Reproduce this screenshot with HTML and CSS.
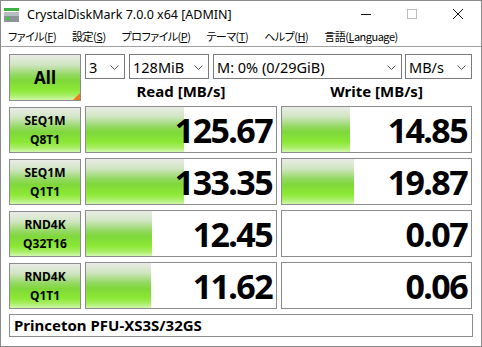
FILE: index.html
```html
<html>
    <head>
        <meta charset="UTF-8">
        <link rel="stylesheet" href="styles.css">
    </head>
    <body>
        <div class="window">
            <div class="titlebar">
                <svg class="app-icon" width="16" height="16" viewBox="0 0 16 16">
                    <rect x="0" y="0" width="15" height="3" fill="#3cb043"/>
                    <rect x="0" y="4" width="15" height="10" fill="#8d9499"/>
                    <rect x="0" y="4" width="15" height="4" fill="#b7bdc1"/>
                    <rect x="2" y="9" width="4" height="3" fill="#45c04a"/>
                </svg>
                <span class="title">CrystalDiskMark 7.0.0 x64 [ADMIN]</span>
                <div class="caption-btn">
                    <svg width="10" height="10" viewBox="0 0 10 10"><line x1="0" y1="5.5" x2="10" y2="5.5" stroke="#111" stroke-width="1"/></svg>
                </div>
                <div class="caption-btn">
                    <svg width="10" height="10" viewBox="0 0 10 10"><rect x="0.5" y="0.5" width="9" height="9" fill="none" stroke="#bdbdbd" stroke-width="1"/></svg>
                </div>
                <div class="caption-btn">
                    <svg width="10" height="10" viewBox="0 0 10 10"><path d="M0 0 L10 10 M10 0 L0 10" stroke="#111" stroke-width="1"/></svg>
                </div>
            </div>
            <div class="menubar">
                <span>ファイル(<u>F</u>)</span>
                <span>設定(<u>S</u>)</span>
                <span>プロファイル(<u>P</u>)</span>
                <span>テーマ(<u>T</u>)</span>
                <span>ヘルプ(<u>H</u>)</span>
                <span>言語(<u>L</u>anguage)</span>
            </div>
            <div class="main">
                <div class="grid">
                    <div class="all-btn green">All<span class="corner"></span></div>
                    <div class="top-right">
                        <div class="selects">
                            <div class="select w-count">3<svg class="chev" width="9" height="5" viewBox="0 0 9 5"><polyline points="0.5,0.5 4.5,4.5 8.5,0.5" fill="none" stroke="#555"/></svg></div>
                            <div class="select w-size">128MiB<svg class="chev" width="9" height="5" viewBox="0 0 9 5"><polyline points="0.5,0.5 4.5,4.5 8.5,0.5" fill="none" stroke="#555"/></svg></div>
                            <div class="select w-drive">M: 0% (0/29GiB)<svg class="chev" width="9" height="5" viewBox="0 0 9 5"><polyline points="0.5,0.5 4.5,4.5 8.5,0.5" fill="none" stroke="#555"/></svg></div>
                            <div class="select w-unit">MB/s<svg class="chev" width="9" height="5" viewBox="0 0 9 5"><polyline points="0.5,0.5 4.5,4.5 8.5,0.5" fill="none" stroke="#555"/></svg></div>
                        </div>
                        <div class="headers">
                            <div>Read [MB/s]</div>
                            <div>Write [MB/s]</div>
                        </div>
                    </div>

                    <div class="test-btn green">SEQ1M<br>Q8T1</div>
                    <div class="result"><div class="bar" style="width: 98px"></div><div class="value">125.67</div></div>
                    <div class="result"><div class="bar" style="width: 68px"></div><div class="value">14.85</div></div>

                    <div class="test-btn green">SEQ1M<br>Q1T1</div>
                    <div class="result"><div class="bar" style="width: 98px"></div><div class="value">133.35</div></div>
                    <div class="result"><div class="bar" style="width: 72px"></div><div class="value">19.87</div></div>

                    <div class="test-btn green">RND4K<br>Q32T16</div>
                    <div class="result"><div class="bar" style="width: 66px"></div><div class="value">12.45</div></div>
                    <div class="result"><div class="value">0.07</div></div>

                    <div class="test-btn green">RND4K<br>Q1T1</div>
                    <div class="result"><div class="bar" style="width: 65px"></div><div class="value">11.62</div></div>
                    <div class="result"><div class="value">0.06</div></div>
                </div>
                <div class="comment">Princeton PFU-XS3S/32GS</div>
            </div>
        </div>
    </body>
</html>
```

FILE: styles.css
```css
body {
    margin: 0;
    font-family: "Noto Sans", sans-serif;
    color: #000;
}

.window {
    width: 482px;
    height: 347px;
    box-sizing: border-box;
    border: 1px solid #8a8a8a;
    background: #fff;
}

.titlebar {
    height: 25px;
    display: flex;
    align-items: center;
}

.app-icon {
    margin: 4px 7px 0 3px;
}

.title {
    flex: 1;
    font-size: 12.5px;
    padding-top: 1px;
}

.caption-btn {
    width: 46px;
    height: 25px;
    display: flex;
    align-items: center;
    justify-content: center;
}

.menubar {
    height: 20px;
    display: flex;
    align-items: center;
    padding-left: 7px;
    border-bottom: 1px solid #a0a0a0;
    font-family: "Noto Sans CJK JP", sans-serif;
    font-feature-settings: "palt";
    font-size: 11px;
    letter-spacing: -0.5px;
}

.menubar span {
    margin-right: 16px;
}

.main {
    padding: 7px 8px 0 8px;
}

.grid {
    display: grid;
    grid-template-columns: 72px 192px 191px;
    grid-template-rows: 47px repeat(4, 47px);
    gap: 5px 4px;
}

.green {
    background: linear-gradient(to bottom, #eaece8 0%, #cfe5c0 22%, #93d862 44%, #7fd83a 56%, #8be835 78%, #a9ee66 90%, #d2f7ae 100%);
    border: 1px solid #8c8c8c;
    box-sizing: border-box;
}

.all-btn {
    position: relative;
    display: flex;
    align-items: center;
    justify-content: center;
    font-weight: bold;
    font-size: 17px;
}

.corner {
    position: absolute;
    right: 0;
    bottom: 0;
    width: 0;
    height: 0;
    border-left: 7px solid transparent;
    border-bottom: 7px solid #f07a18;
}

.top-right {
    grid-column: 2 / 4;
    display: flex;
    flex-direction: column;
}

.selects {
    display: flex;
    gap: 4px;
}

.select {
    height: 25px;
    box-sizing: border-box;
    border: 1px solid #7a7a7a;
    display: flex;
    align-items: center;
    justify-content: space-between;
    padding: 0 5px 0 3px;
    font-size: 14.5px;
}

.chev {
    margin-top: 2px;
}

.w-count { width: 40px; }
.w-size { width: 80px; }
.w-drive { width: 189px; }
.w-unit { width: 67px; margin-left: -1px; }

.headers {
    flex: 1;
    display: grid;
    grid-template-columns: 192px 191px;
    gap: 4px;
    align-items: center;
    text-align: center;
    font-weight: bold;
    font-size: 15px;
    padding-top: 2px;
}

.test-btn {
    margin-top: 1px;
    display: flex;
    align-items: center;
    justify-content: center;
    text-align: center;
    font-weight: bold;
    font-size: 12px;
    line-height: 19px;
}

.result {
    border: 1px solid #8c8c8c;
    display: grid;
    box-sizing: border-box;
}

.bar {
    grid-area: 1 / 1;
    justify-self: start;
    height: 100%;
    background: linear-gradient(to bottom, #eaece8 0%, #cfe5c0 22%, #93d862 44%, #7fd83a 56%, #8be835 78%, #a9ee66 90%, #d2f7ae 100%);
}

.value {
    grid-area: 1 / 1;
    justify-self: end;
    align-self: center;
    font-weight: bold;
    font-size: 34px;
    letter-spacing: -1.6px;
    line-height: 1;
    padding-right: 4px;
}

.comment {
    margin-top: 5px;
    height: 23px;
    box-sizing: border-box;
    border: 1px solid #8c8c8c;
    font-weight: bold;
    font-size: 15px;
    line-height: 21px;
    padding-left: 4px;
}
```
